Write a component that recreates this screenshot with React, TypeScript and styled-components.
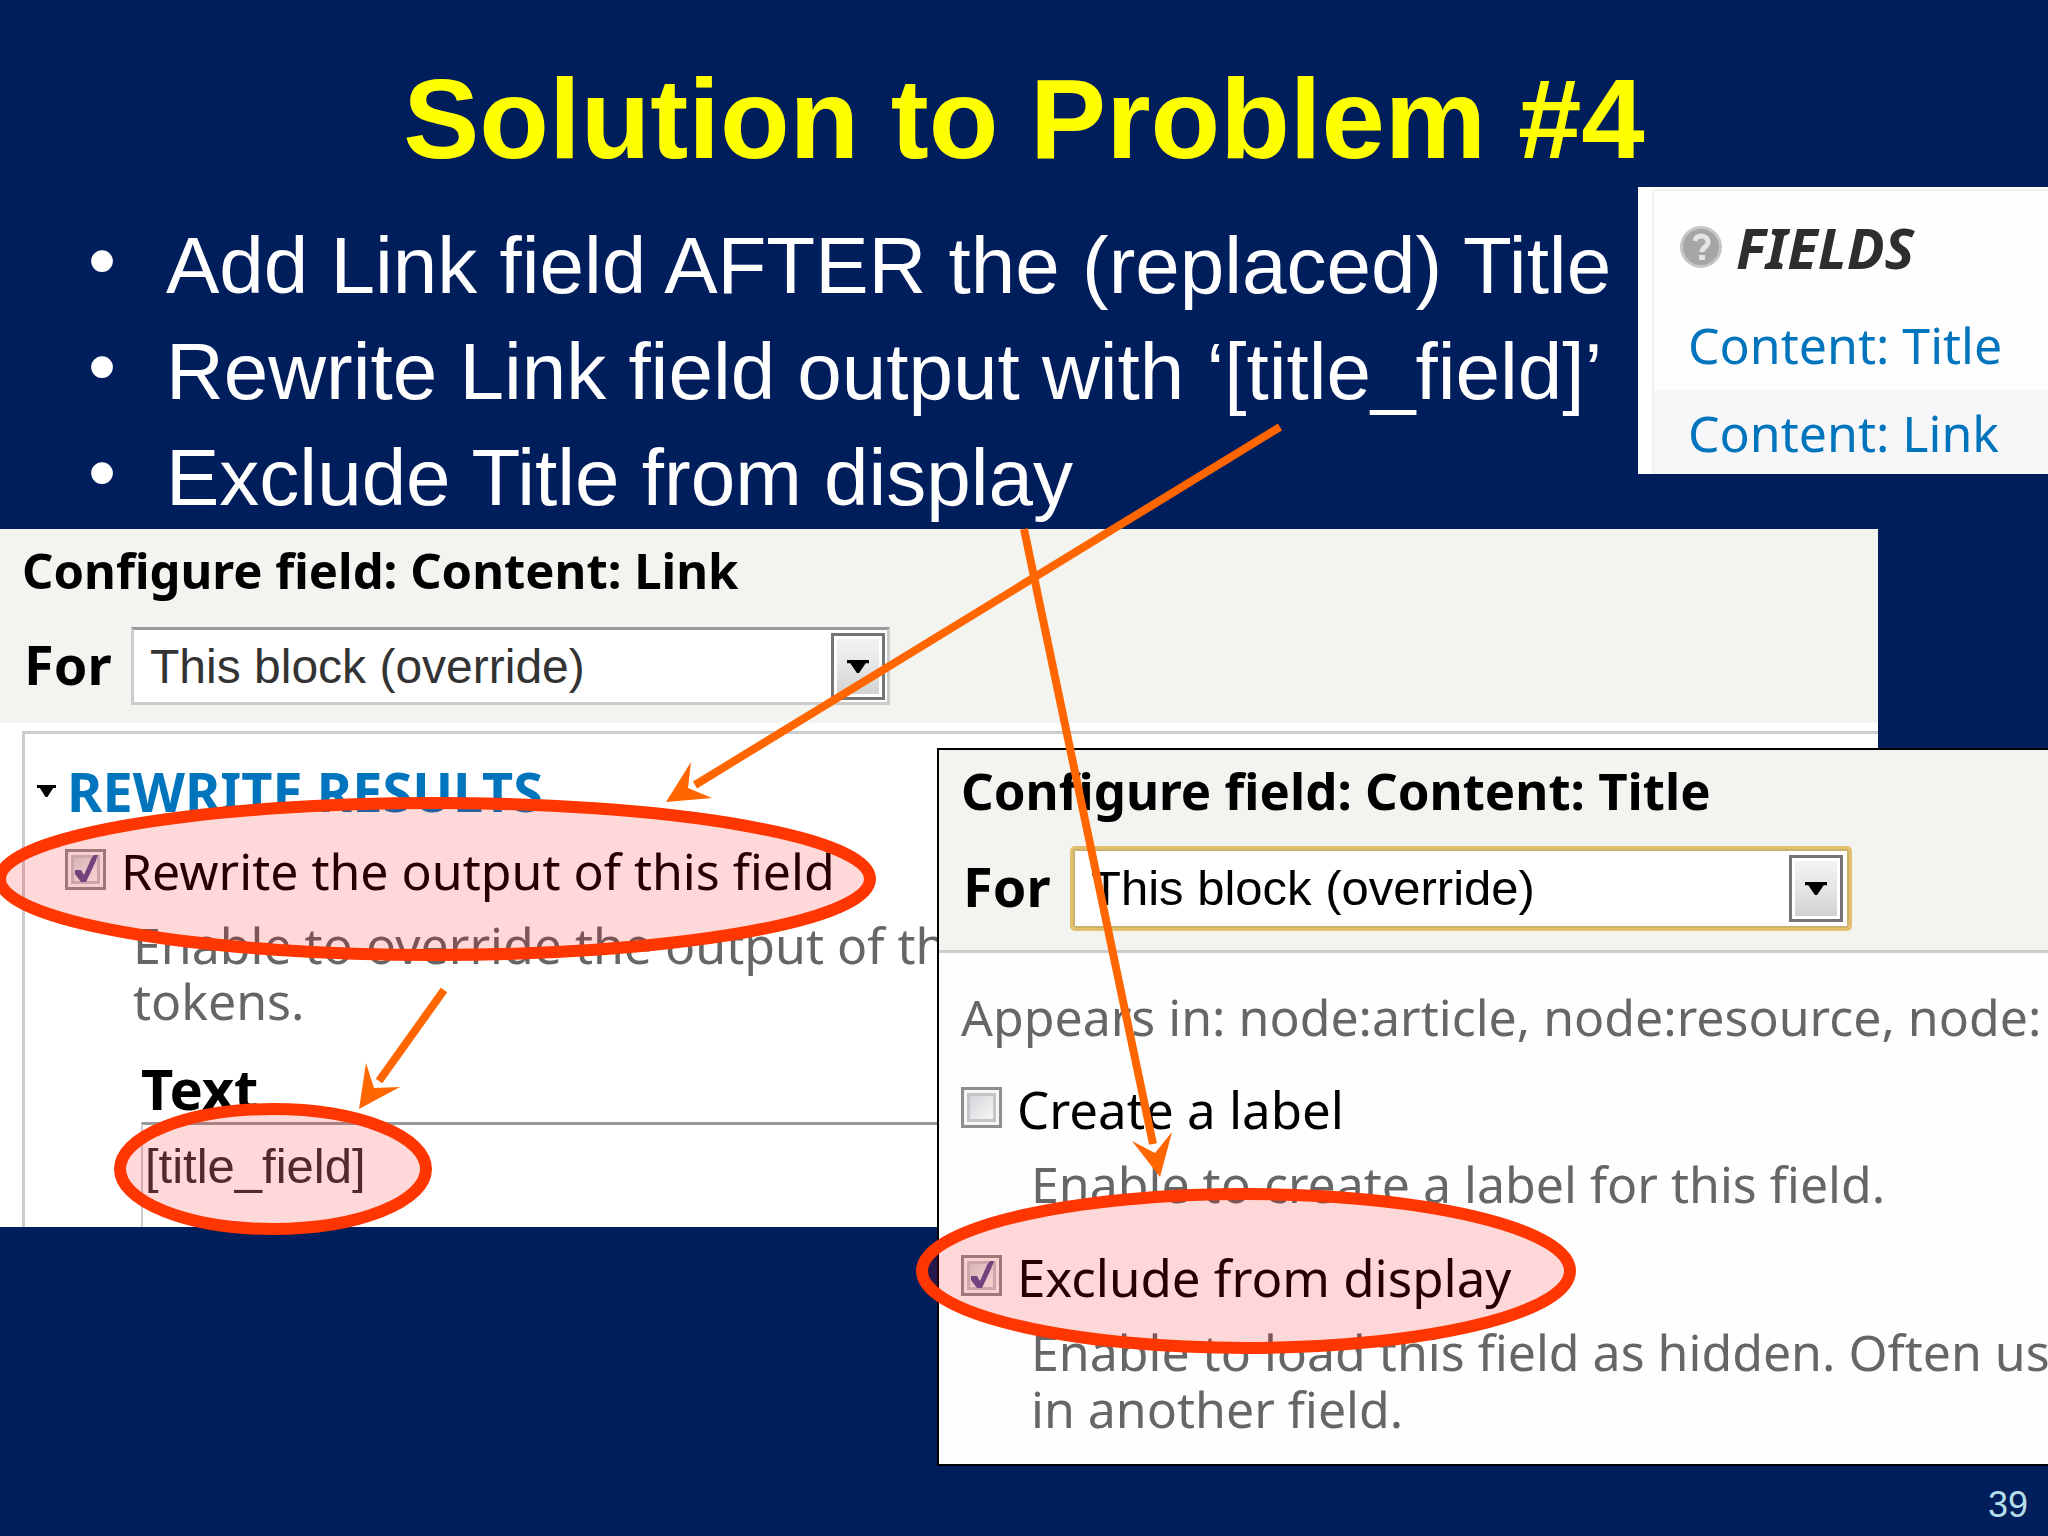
import React from "react";
import styled, { createGlobalStyle } from "styled-components";

const sans = `"Liberation Sans", Arial, sans-serif`;
const humanist = `"Noto Sans", "Open Sans", sans-serif`;

const GlobalStyle = createGlobalStyle`
  *, *::before, *::after { box-sizing: border-box; }
  body { margin: 0; background: #001e5c; }
`;

const Slide = styled.main`
  position: relative;
  min-height: 100vh;
  overflow: hidden;
  background: #001e5c;
  font-family: ${sans};
`;

const SlideTitle = styled.h1`
  margin: 0;
  padding: 54px 0 3px;
  color: #ffff00;
  font-size: 114px;
  line-height: 130px;
  font-weight: 700;
  text-align: center;
`;

const Intro = styled.div`
  display: flex;
  align-items: flex-start;
  justify-content: space-between;
  height: 342px;
`;

const Bullets = styled.ul`
  margin: 0;
  padding: 26px 0 0 88px;
  list-style: none;
  color: #ffffff;
  font-size: 80px;
  line-height: 106px;
  white-space: nowrap;
`;

const Bullet = styled.li`
  display: flex;

  &::before {
    content: "•";
    width: 78px;
    line-height: 96px;
  }
`;

const FieldsCard = styled.section`
  flex: none;
  width: 410px;
  padding: 2px 0 0 14px;
  background: #ffffff;
  font-family: ${humanist};
  font-size: 50px;
  line-height: 56px;
`;

const FieldsBody = styled.div`
  border-top: 2px solid #f1f0f1;
  border-left: 2px solid #f1eff1;
  background: #fefefe;
`;

const FieldsHeading = styled.h2`
  display: flex;
  align-items: center;
  gap: 14px;
  margin: 0;
  padding: 28px 0 27px 26px;
  color: #2e2e2e;
  font-size: 56px;
  font-weight: 700;
  font-style: italic;
`;

const FieldLink = styled.a<{ $shaded?: boolean }>`
  display: block;
  padding: ${(p) => (p.$shaded ? "15px 0 13px 34px" : "15px 0 17px 34px")};
  background: ${(p) => (p.$shaded ? "#f7f6f8" : "transparent")};
  color: #0074bd;
  text-decoration: none;
`;

const LinkPanel = styled.section`
  width: calc(100% - 170px);
  background: #ffffff;
  font-family: ${humanist};
  font-size: 50px;
  line-height: 56px;
`;

const TitlePanel = styled.section`
  position: absolute;
  top: 748px;
  left: 937px;
  right: 0;
  overflow: hidden;
  border: solid #000000;
  border-width: 2px 0 2px 2px;
  background: #fefefe;
  font-family: ${humanist};
  font-size: 51px;
  line-height: 57px;
`;

const PanelHeader = styled.header<{ $ruled?: boolean }>`
  display: flex;
  flex-direction: column;
  gap: ${(p) => (p.$ruled ? 28 : 29)}px;
  padding: ${(p) => (p.$ruled ? "12px 22px 19px" : "13px 22px 18px")};
  border-bottom: ${(p) => (p.$ruled ? "3px solid #cccccc" : "none")};
  background: #f3f3f0;
`;

const PanelHeading = styled.h2<{ $large?: boolean }>`
  margin: 0;
  color: #000000;
  font-size: ${(p) => (p.$large ? 51 : 49)}px;
  line-height: 56px;
  font-weight: 700;
`;

const ForRow = styled.div`
  display: flex;
  align-items: center;
`;

const ForLabel = styled.label`
  width: 109px;
  padding: 0 0 4px 2px;
  color: #000000;
  font-size: 54px;
  font-weight: 700;
`;

const SelectBox = styled.div<{ $focused?: boolean }>`
  position: relative;
  width: ${(p) => (p.$focused ? 782 : 759)}px;
`;

const Select = styled.select<{ $focused?: boolean }>`
  display: block;
  width: 100%;
  height: ${(p) => (p.$focused ? 85 : 78)}px;
  padding: 0 64px 0 16px;
  border: 3px solid #cccccc;
  border-top-color: #999999;
  border-radius: 0;
  background: #ffffff;
  color: #333333;
  font-family: ${sans};
  font-size: 48px;
  appearance: none;
  outline: none;

  ${(p) =>
    p.$focused &&
    `
    padding-left: 18px;
    padding-bottom: 2px;
    border: 3px solid #e3c06c;
    border-radius: 5px;
    box-shadow: inset 0 0 0 2px #cdb06a;
    color: #000000;
    font-size: 49px;
  `}
`;

const DropArrow = styled.span<{ $focused?: boolean }>`
  position: absolute;
  top: ${(p) => (p.$focused ? 9 : 6)}px;
  right: ${(p) => (p.$focused ? 9 : 5)}px;
  display: grid;
  place-items: center;
  width: 54px;
  height: 67px;
  border: 3px solid #757575;
  background: linear-gradient(#f4f4f4, #e6e6e6 50%, #cfcfcf);
  box-shadow: inset 0 0 0 3px #ffffff;
  pointer-events: none;
`;

const Fieldset = styled.div`
  display: flex;
  flex-direction: column;
  margin: 8px 0 0 22px;
  padding-top: 29px;
  border-top: 3px solid #cccccc;
  border-left: 3px solid #cccccc;
`;

const FieldsetLegend = styled.h3`
  display: flex;
  align-items: center;
  gap: 11px;
  margin: 0 0 22px;
  padding-left: 12px;
  color: #0074bd;
  font-size: 54px;
  line-height: 56px;
  font-weight: 700;
`;

const Options = styled.div`
  padding: 36px 0 26px 22px;
`;

const Appears = styled.p`
  margin: 0 0 33px;
  color: #666666;
  font-size: 50px;
  white-space: nowrap;
`;

const CheckRow = styled.label<{ $indent?: number }>`
  display: flex;
  align-items: center;
  gap: 15px;
  padding-left: ${(p) => p.$indent || 0}px;
  color: #000000;
  white-space: nowrap;
`;

const CheckText = styled.span`
  padding-top: 2px;
  margin-bottom: -2px;
`;

const TickBox = styled.span`
  position: relative;
  display: block;
  width: 41px;
  height: 41px;
`;

const TickInput = styled.input`
  display: block;
  width: 41px;
  height: 41px;
  margin: 0;
  border: 3px solid #8f8f8f;
  background: linear-gradient(135deg, #c9cbd0, #f6f6f6 80%);
  box-shadow: inset 0 0 0 3px #f6f6f6, inset 0 0 0 6px #c4c4c8;
  appearance: none;
`;

const TickMark = styled.svg`
  position: absolute;
  inset: 0;
  pointer-events: none;
`;

const Help = styled.p<{ $indent: number; $after: number }>`
  margin: 20px 0 ${(p) => p.$after}px;
  padding-left: ${(p) => p.$indent}px;
  color: #666666;
  font-size: 50px;
  white-space: nowrap;
`;

const TextField = styled.div`
  display: flex;
  flex-direction: column;
  gap: 6px;
  padding-left: 116px;
`;

const TextLabel = styled.label`
  color: #000000;
  font-size: 56px;
  font-weight: 700;
`;

const TextArea = styled.textarea`
  display: block;
  width: 100%;
  height: 105px;
  padding: 13px 0 0 2px;
  border: 0 solid #cccccc;
  border-width: 3px 0 0 2px;
  border-top-color: #999999;
  border-radius: 0;
  background: #ffffff;
  color: #333333;
  font-family: ${sans};
  font-size: 49px;
  line-height: 56px;
  resize: none;
  overflow: hidden;
  outline: none;
`;

const PageNumber = styled.footer`
  position: absolute;
  right: 20px;
  bottom: 9px;
  color: #b5dde8;
  font-size: 36px;
  line-height: 44px;
`;

const Markup = styled.svg`
  position: absolute;
  top: 0;
  left: 0;
  pointer-events: none;
`;

const HelpIcon = () => (
  <svg width="42" height="42" viewBox="0 0 42 42" aria-hidden="true">
    <circle cx="21" cy="21" r="19.5" fill="#a6a6a6" stroke="#c6c6c6" strokeWidth="3" />
    <path
      d="M15 15c1-4 3-5 6-5s7 2 7 6c0 5-6 5-6 10"
      fill="none"
      stroke="#e4e4e4"
      strokeWidth="5"
    />
    <rect x="19" y="29" width="6" height="5" fill="#e4e4e4" />
  </svg>
);

const Triangle = ({ width, height }: { width: number; height: number }) => (
  <svg width={width} height={height} viewBox="0 0 20 12" preserveAspectRatio="none" aria-hidden="true">
    <path d="M0 0H20V3H17L11 12H9L3 3H0Z" fill="#000000" />
  </svg>
);

type OverrideProps = { id: string; focused?: boolean };

const OverrideSelect = ({ id, focused }: OverrideProps) => (
  <ForRow>
    <ForLabel htmlFor={id}>For</ForLabel>
    <SelectBox $focused={focused}>
      <Select id={id} $focused={focused} defaultValue="block">
        <option value="block">This block (override)</option>
      </Select>
      <DropArrow $focused={focused}>
        <Triangle width={22} height={13} />
      </DropArrow>
    </SelectBox>
  </ForRow>
);

type CheckProps = { label: string; checked?: boolean; indent?: number };

const Check = ({ label, checked, indent }: CheckProps) => (
  <CheckRow $indent={indent}>
    <TickBox>
      <TickInput type="checkbox" defaultChecked={checked} />
      {checked && (
        <TickMark width="41" height="41" viewBox="0 0 41 41" aria-hidden="true">
          <path d="M10 21h6l3 5 7-16 3-4h4l-3 8-9 19h-5l-6-8Z" fill="#5b4f94" />
        </TickMark>
      )}
    </TickBox>
    <CheckText>{label}</CheckText>
  </CheckRow>
);

const Annotations = () => (
  <Markup width="2048" height="1536" viewBox="0 0 2048 1536" aria-hidden="true">
    <g fill="#ff0000" fillOpacity="0.15" stroke="#ff3600" strokeWidth="12">
      <ellipse cx="435" cy="879" rx="435" ry="76" />
      <ellipse cx="273" cy="1169" rx="153" ry="60" />
      <ellipse cx="1246" cy="1271" rx="324" ry="77" />
    </g>
    <g stroke="#ff6600" strokeWidth="8">
      <path d="M1280 427L695 785" />
      <path d="M1024 529L1153 1144" />
      <path d="M444 990L379 1081" />
    </g>
    <g fill="#ff6600">
      <path d="M666 802L691 762L688 788L712 798Z" />
      <path d="M1160 1177L1132 1141L1155 1153L1172 1132Z" />
      <path d="M359 1109L366 1063L374 1088L400 1087Z" />
    </g>
  </Markup>
);

export default function App() {
  return (
    <>
      <GlobalStyle />
      <Slide>
        <SlideTitle>Solution to Problem #4</SlideTitle>
        <Intro>
          <Bullets>
            <Bullet>Add Link field AFTER the (replaced) Title</Bullet>
            <Bullet>Rewrite Link field output with ‘[title_field]’</Bullet>
            <Bullet>Exclude Title from display</Bullet>
          </Bullets>
          <FieldsCard>
            <FieldsBody>
              <FieldsHeading>
                <HelpIcon />
                FIELDS
              </FieldsHeading>
              <FieldLink href="#title">Content: Title</FieldLink>
              <FieldLink href="#link" $shaded>
                Content: Link
              </FieldLink>
            </FieldsBody>
          </FieldsCard>
        </Intro>

        <LinkPanel>
          <PanelHeader>
            <PanelHeading>Configure field: Content: Link</PanelHeading>
            <OverrideSelect id="link-scope" />
          </PanelHeader>
          <Fieldset>
            <FieldsetLegend>
              <Triangle width={19} height={12} />
              REWRITE RESULTS
            </FieldsetLegend>
            <Check label="Rewrite the output of this field" checked indent={40} />
            <Help $indent={108} $after={31}>
              Enable to override the output of th
              <br />
              tokens.
            </Help>
            <TextField>
              <TextLabel htmlFor="rewrite-text">Text</TextLabel>
              <TextArea id="rewrite-text" defaultValue="[title_field]" spellCheck={false} />
            </TextField>
          </Fieldset>
        </LinkPanel>

        <TitlePanel>
          <PanelHeader $ruled>
            <PanelHeading $large>Configure field: Content: Title</PanelHeading>
            <OverrideSelect id="title-scope" focused />
          </PanelHeader>
          <Options>
            <Appears>Appears in: node:article, node:resource, node:</Appears>
            <Check label="Create a label" />
            <Help $indent={70} $after={34}>
              Enable to create a label for this field.
            </Help>
            <Check label="Exclude from display" checked />
            <Help $indent={70} $after={0}>
              Enable to load this field as hidden. Often us
              <br />
              in another field.
            </Help>
          </Options>
        </TitlePanel>

        <PageNumber>39</PageNumber>
        <Annotations />
      </Slide>
    </>
  );
}
